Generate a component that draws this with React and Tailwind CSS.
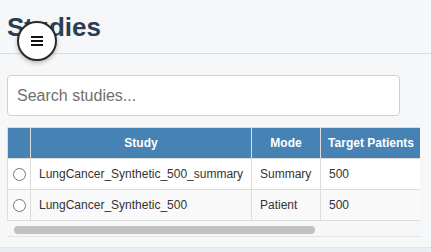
import { useState } from "react";

const studies = [
  { id: 1, name: "LungCancer_Synthetic_500_summary", mode: "Summary", target: 500 },
  { id: 2, name: "LungCancer_Synthetic_500", mode: "Patient", target: 500 },
];

export default function App() {
  const [selected, setSelected] = useState(null);
  const [query, setQuery] = useState("");

  const rows = studies.filter((s) => s.name.toLowerCase().includes(query.toLowerCase()));

  return (
    <div className="relative h-[252px] flex flex-col bg-[#f6f7f9] font-['Liberation_Sans',Arial,sans-serif] overflow-hidden">
      {/* header */}
      <div className="border-b border-[#dcdcdc] pt-[12px] pb-[11px] px-[7px]">
        <h1 className="text-[26px] leading-[30px] font-bold text-[#2c3e50]">Studies</h1>
      </div>
      <button className="absolute left-[17px] top-[21px] w-[40px] h-[40px] rounded-full bg-white border-2 border-[#2b2b2b] shadow-[0_2px_4px_rgba(0,0,0,0.25)] flex items-center justify-center">
        <svg width="12" height="10" viewBox="0 0 12 10">
          <rect x="0" y="0" width="12" height="2" fill="#111" />
          <rect x="0" y="4" width="12" height="2" fill="#111" />
          <rect x="0" y="8" width="12" height="2" fill="#111" />
        </svg>
      </button>

      <div className="px-[7px] pt-[21px]">
        <input
          type="text"
          value={query}
          onChange={(e) => setQuery(e.target.value)}
          placeholder="Search studies..."
          className="w-[393px] h-[41px] px-[9px] bg-white border border-[#d0d0d0] rounded-[4px] text-[16px] text-[#333] placeholder:text-[#6f6f6f] outline-none"
        />

        <div className="mt-[11px] w-[413px] border-b border-[#e4e4e4]">
          <div className="overflow-hidden">
            <table className="w-[563px] border-collapse text-[12px] text-[#333] table-fixed">
              <thead>
                <tr className="bg-[#4682b4] text-white h-[31px]">
                  <th className="w-[23px] border border-[#dcdcdc]"></th>
                  <th className="w-[221px] border border-[#dcdcdc] font-bold">Study</th>
                  <th className="w-[69px] border border-[#dcdcdc] font-bold">Mode</th>
                  <th className="w-[101px] border border-[#dcdcdc] font-bold whitespace-nowrap">Target Patients</th>
                  <th className="w-[149px] border border-[#dcdcdc]"></th>
                </tr>
              </thead>
              <tbody>
                {rows.map((s, i) => (
                  <tr key={s.id} className={`h-[31px] ${i % 2 === 1 ? "bg-[#f9f9f9]" : "bg-white"}`}>
                    <td className="border border-[#dcdcdc] text-center">
                      <input
                        type="radio"
                        name="study"
                        checked={selected === s.id}
                        onChange={() => setSelected(s.id)}
                        className="w-[13px] h-[13px] align-middle"
                      />
                    </td>
                    <td className="border border-[#dcdcdc] px-[8px] whitespace-nowrap">{s.name}</td>
                    <td className="border border-[#dcdcdc] px-[8px]">{s.mode}</td>
                    <td className="border border-[#dcdcdc] px-[8px]">{s.target}</td>
                    <td className="border border-[#dcdcdc]"></td>
                  </tr>
                ))}
              </tbody>
            </table>
          </div>
          {/* scrollbar */}
          <div className="h-[15px] pt-[5px] pl-[7px]">
            <div className="w-[301px] h-[8px] rounded-full bg-[#c1c1c1]"></div>
          </div>
        </div>
      </div>

      <div className="mt-[10px] flex-1 bg-[#e9eef5] border-t border-[#dfe5ee]"></div>
    </div>
  );
}
